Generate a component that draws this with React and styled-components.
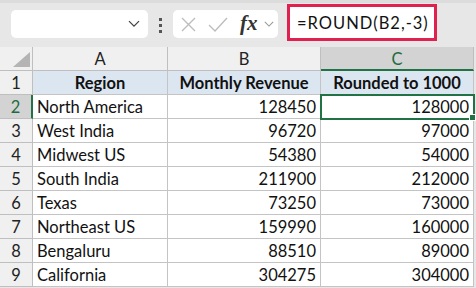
import styled, { createGlobalStyle } from 'styled-components';

const GlobalStyle = createGlobalStyle`
  html, body {
    margin: 0;
    padding: 0;
    background: #e7e7e7;
  }
  body {
    font-family: Lato, "Liberation Sans", sans-serif;
  }
`;

const COLS = ['A', 'B', 'C'];
const rows = [
  ['North America', 128450, 128000],
  ['West India', 96720, 97000],
  ['Midwest US', 54380, 54000],
  ['South India', 211900, 212000],
  ['Texas', 73250, 73000],
  ['Northeast US', 159990, 160000],
  ['Bengaluru', 88510, 89000],
  ['California', 304275, 304000],
];

const Sheet = styled.div`
  width: 476px;
  height: 288px;
  overflow: hidden;
  background: #e7e7e7;
`;

const Toolbar = styled.div`
  height: 47px;
  box-sizing: border-box;
  border-top: 3px solid #dcdcdc;
  display: flex;
  align-items: flex-start;
  padding: 7px 0 0 11px;
`;

const NameBox = styled.div`
  width: 137px;
  height: 28px;
  box-sizing: border-box;
  background: #fff;
  border-radius: 5px;
  display: flex;
  align-items: center;
  justify-content: flex-end;
  padding-right: 8px;
`;

const Dots = styled.div`
  width: 3px;
  margin: 8px 11px 0 11px;
  display: flex;
  flex-direction: column;
  gap: 3px;

  span {
    width: 3px;
    height: 3px;
    background: #555;
  }
`;

const FxBox = styled.div`
  width: 105px;
  height: 28px;
  box-sizing: border-box;
  background: #fff;
  border-radius: 5px;
  display: flex;
  align-items: center;
  padding-left: 8px;
  gap: 12px;
`;

const Fx = styled.span`
  font-family: "Liberation Serif", serif;
  font-style: italic;
  font-weight: 700;
  font-size: 21px;
  color: #333;
  margin: -2px -6px 0 0;
`;

const FormulaBox = styled.div`
  width: 150px;
  height: 37px;
  box-sizing: border-box;
  margin: -6px 0 0 9px;
  background: #fff;
  border: 3px solid #e0204f;
  display: flex;
  align-items: center;
  padding-left: 7px;
  font-size: 16.5px;
  letter-spacing: 1px;
  color: #111;
`;

const Grid = styled.div`
  display: grid;
  grid-template-columns: 33px 135px 153px 153px;
`;

const Cell = styled.div`
  height: 24px;
  box-sizing: border-box;
  border-right: 1px solid #c4c4c4;
  border-bottom: 1px solid #c4c4c4;
  background: #fff;
  font-size: 16.5px;
  color: #111;
  display: flex;
  align-items: center;
  justify-content: ${(p) => (p.$num ? 'flex-end' : 'flex-start')};
  padding: 1px 4px 0 4px;
  white-space: nowrap;
  position: relative;
`;

const Head = styled(Cell)`
  background: ${(p) => (p.$active ? '#d3d3d3' : '#f0f0f0')};
  color: ${(p) => (p.$active ? '#1d6b3f' : '#222')};
  justify-content: center;
  border-color: #bfbfbf;
`;

const ColHead = styled(Head)`
  height: 24px;
  border-bottom: ${(p) => (p.$active ? '2px solid #217346' : '1px solid #bfbfbf')};
`;

const Corner = styled(Head)`
  justify-content: flex-end;
  align-items: flex-end;
  padding: 0 2px 3px 0;
`;

const RowHead = styled(Head)`
  border-right: ${(p) => (p.$active ? '2px solid #217346' : '1px solid #bfbfbf')};
`;

const Title = styled(Cell)`
  background: #dce6f1;
  font-weight: 700;
  justify-content: center;
`;

const Selected = styled(Cell)`
  outline: 2px solid #217346;
  outline-offset: -1px;
  z-index: 1;

  &::after {
    content: '';
    position: absolute;
    right: -3px;
    bottom: -3px;
    width: 5px;
    height: 5px;
    background: #217346;
    border: 1px solid #fff;
  }
`;

const Chevron = ({ size = 12, color = '#444' }) => (
  <svg width={size} height={size * 0.6} viewBox="0 0 12 7">
    <path d="M1 1 L6 6 L11 1" fill="none" stroke={color} strokeWidth="1.3" />
  </svg>
);

export default function App() {
  return (
    <Sheet>
      <GlobalStyle />
      <Toolbar>
        <NameBox>
          <Chevron />
        </NameBox>
        <Dots>
          <span />
          <span />
          <span />
        </Dots>
        <FxBox>
          <svg width="15" height="15" viewBox="0 0 15 15">
            <path d="M1 1 L14 14 M14 1 L1 14" stroke="#bdbdbd" strokeWidth="1.4" />
          </svg>
          <svg width="20" height="15" viewBox="0 0 20 15">
            <path d="M1 8 L7 14 L19 1" fill="none" stroke="#bdbdbd" strokeWidth="1.4" />
          </svg>
          <Fx>fx</Fx>
          <Chevron size={10} color="#999" />
        </FxBox>
        <FormulaBox>=ROUND(B2,-3)</FormulaBox>
      </Toolbar>
      <Grid>
        <Corner>
          <svg width="17" height="15" viewBox="0 0 17 15">
            <path d="M17 0 L17 15 L0 15 Z" fill="#b4b4b4" />
          </svg>
        </Corner>
        {COLS.map((c) => (
          <ColHead key={c} $active={c === 'C'}>
            {c}
          </ColHead>
        ))}
        <RowHead>1</RowHead>
        <Title>Region</Title>
        <Title>Monthly Revenue</Title>
        <Title>Rounded to 1000</Title>
        {rows.map(([region, revenue, rounded], i) => (
          <Row key={region} n={i + 2} region={region} revenue={revenue} rounded={rounded} />
        ))}
      </Grid>
    </Sheet>
  );
}

const Row = ({ n, region, revenue, rounded }) => {
  const active = n === 2;
  const Target = active ? Selected : Cell;
  return (
    <>
      <RowHead $active={active}>{n}</RowHead>
      <Cell>{region}</Cell>
      <Cell $num>{revenue}</Cell>
      <Target $num>{rounded}</Target>
    </>
  );
};
